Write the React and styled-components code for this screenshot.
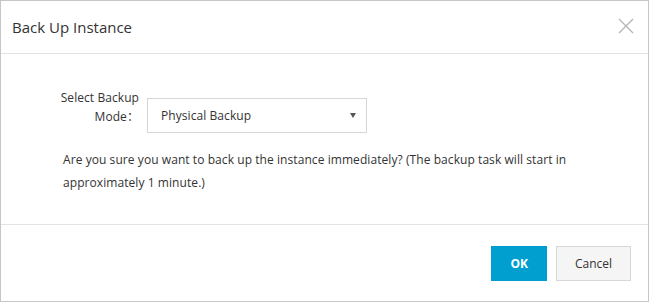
import React from "react";
import styled, { createGlobalStyle } from "styled-components";

const GlobalStyle = createGlobalStyle`
  html, body {
    margin: 0;
    padding: 0;
    background: #fff;
  }
  * {
    box-sizing: border-box;
  }
`;

const Dialog = styled.div`
  width: 649px;
  height: 302px;
  border: 1px solid #c6c6c6;
  background: #fff;
  display: flex;
  flex-direction: column;
  font-family: "Open Sans", "Noto Sans", "Noto Sans CJK SC", sans-serif;
  color: #333;
`;

const Header = styled.div`
  height: 53px;
  flex: none;
  display: flex;
  align-items: center;
  justify-content: space-between;
  padding: 0 13px 0 11px;
  border-bottom: 1px solid #e3e3e3;

  .title {
    font-size: 15px;
    color: #333;
    margin-top: -1px;
  }
`;

const Close = styled.button`
  width: 18px;
  height: 18px;
  padding: 0;
  margin-top: -3px;
  border: none;
  background: none;
  display: flex;
  align-items: center;
  justify-content: center;
`;

const Body = styled.div`
  flex: 1;
  padding: 44px 28px 0 28px;
  letter-spacing: 0.07px;
`;

const FormRow = styled.div`
  display: grid;
  grid-template-columns: 110px 220px;
  column-gap: 8px;
  align-items: center;
`;

const Label = styled.label`
  font-size: 12px;
  line-height: 19px;
  text-align: right;
  color: #333;
  margin-top: -18px;
`;

const Select = styled.div`
  position: relative;
  height: 35px;
  border: 1px solid #d6d6d6;
  display: flex;
  align-items: center;
  padding: 0 13px;
  font-size: 12px;
  color: #333;
  background: #fff;

  .arrow {
    position: absolute;
    right: 10px;
    top: 14px;
  }
`;

const Message = styled.p`
  margin: 15px 0 0 34px;
  max-width: 560px;
  font-size: 12px;
  line-height: 23px;
  color: #333;
`;

const Footer = styled.div`
  height: 77px;
  flex: none;
  display: flex;
  align-items: center;
  justify-content: flex-end;
  gap: 9px;
  padding: 0 17px 0 0;
  border-top: 1px solid #e3e3e3;
`;

const Button = styled.button`
  height: 35px;
  min-width: ${p => (p.$primary ? "55px" : "75px")};
  padding: 0 ${p => (p.$primary ? "18px" : "16px")};
  font-family: "Open Sans", "Noto Sans", sans-serif;
  font-size: 12px;
  font-weight: ${p => (p.$primary ? 700 : 400)};
  border: 1px solid ${p => (p.$primary ? "#009fd0" : "#d8d8d8")};
  background: ${p => (p.$primary ? "#009fd0" : "#f5f5f5")};
  color: ${p => (p.$primary ? "#fff" : "#333")};
  cursor: pointer;
`;

export default function App() {
  return (
    <>
      <GlobalStyle />
      <Dialog>
        <Header>
          <span className="title">Back Up Instance</span>
          <Close aria-label="close">
            <svg width="16" height="16" viewBox="0 0 16 16">
              <path d="M1 1L15 15M15 1L1 15" stroke="#b4b4b4" strokeWidth="1.3" fill="none" />
            </svg>
          </Close>
        </Header>
        <Body>
          <FormRow>
            <Label>Select Backup Mode：</Label>
            <Select>
              Physical Backup
              <svg className="arrow" width="6" height="5" viewBox="0 0 6 5">
                <path d="M0 0H6L3 5Z" fill="#555" />
              </svg>
            </Select>
          </FormRow>
          <Message>
            Are you sure you want to back up the instance immediately? (The backup task will start in
            approximately 1 minute.)
          </Message>
        </Body>
        <Footer>
          <Button $primary>OK</Button>
          <Button>Cancel</Button>
        </Footer>
      </Dialog>
    </>
  );
}
